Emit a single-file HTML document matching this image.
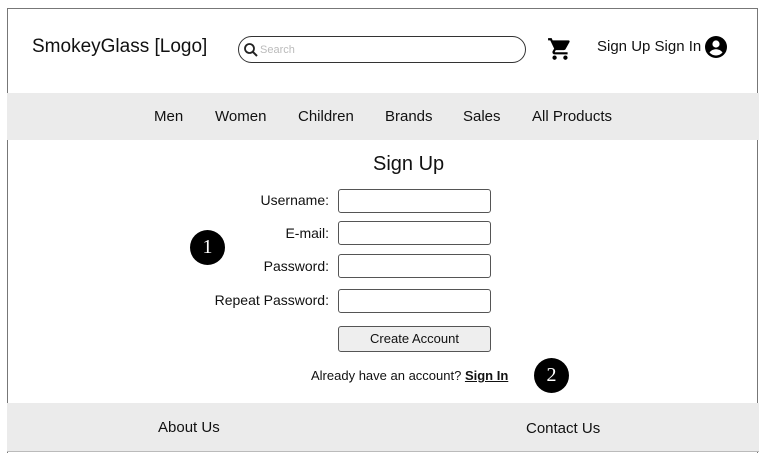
<!DOCTYPE html>
<html><head><meta charset="utf-8"><style>
*{margin:0;padding:0;box-sizing:border-box}
body{width:770px;height:463px;background:#fff;font-family:"Liberation Sans",Arial,sans-serif;color:#111;position:relative;overflow:hidden}
.a{position:absolute;white-space:nowrap}
.frame{left:7px;top:8px;width:751px;height:445px;border:1px solid #777;border-bottom:none}
.band{background:#ebebeb;left:7px;width:752px}
.inp{position:absolute;left:338px;width:153px;height:24px;border:1px solid #555;border-radius:3px;background:#fff}
.lbl{position:absolute;right:441px;font-size:14px}
.circ{position:absolute;width:35px;height:35px;border-radius:50%;background:#000;color:#fff;font-family:"Liberation Serif",serif;font-size:20px;text-align:center;line-height:35px}
</style></head><body>
<div class="a frame"></div>
<div class="a" style="left:32px;top:36px;font-size:19px">SmokeyGlass [Logo]</div>
<div class="a" style="left:238px;top:36px;width:288px;height:27px;border:1px solid #333;border-radius:14px"></div>
<svg class="a" style="left:243px;top:42px" width="16" height="16" viewBox="0 0 16 16"><circle cx="6.5" cy="6.5" r="4.5" fill="none" stroke="#222" stroke-width="1.8"/><line x1="10" y1="10" x2="14" y2="14" stroke="#222" stroke-width="2"/></svg>
<div class="a" style="left:260px;top:44px;font-size:11px;color:#bbb">Search</div>
<svg class="a" style="left:547px;top:36px" width="26" height="26" viewBox="0 0 24 24"><path d="M7 18c-1.1 0-2 .9-2 2s.9 2 2 2 2-.9 2-2-.9-2-2-2zM1 2v2h2l3.6 7.6-1.4 2.4c-.1.3-.2.6-.2 1 0 1.1.9 2 2 2h12v-2H7.4c-.1 0-.2-.1-.2-.2v-.1l.9-1.7h7.4c.8 0 1.4-.4 1.7-1l3.6-6.5c.1-.2.1-.3.1-.5 0-.6-.4-1-1-1H5.2l-.9-2H1zm16 16c-1.1 0-2 .9-2 2s.9 2 2 2 2-.9 2-2-.9-2-2-2z" fill="#000"/></svg>
<div class="a" style="left:597px;top:38px;font-size:15px">Sign Up Sign In</div>
<svg class="a" style="left:704px;top:35px" width="24" height="24" viewBox="0 0 24 24"><circle cx="12" cy="12" r="11" fill="#000"/><circle cx="12" cy="9" r="3.6" fill="#fff"/><path d="M5.5 17.5c1.5-2.3 4-3.3 6.5-3.3s5 1 6.5 3.3c-1.7 1.9-4 3-6.5 3s-4.8-1.1-6.5-3z" fill="#fff"/></svg>
<div class="a band" style="top:93px;height:47px"></div>
<div class="a" style="top:108px;left:154px;font-size:15px">Men</div>
<div class="a" style="top:108px;left:215px;font-size:15px">Women</div>
<div class="a" style="top:108px;left:298px;font-size:15px">Children</div>
<div class="a" style="top:108px;left:385px;font-size:15px">Brands</div>
<div class="a" style="top:108px;left:463px;font-size:15px">Sales</div>
<div class="a" style="top:108px;left:532px;font-size:15px">All Products</div>
<div class="a" style="left:373px;top:153px;font-size:20px">Sign Up</div>
<div class="lbl" style="top:192px">Username:</div><div class="inp" style="top:189px"></div>
<div class="lbl" style="top:225px">E-mail:</div><div class="inp" style="top:221px"></div>
<div class="lbl" style="top:258px">Password:</div><div class="inp" style="top:254px"></div>
<div class="lbl" style="top:292px">Repeat Password:</div><div class="inp" style="top:289px"></div>
<div class="a" style="left:338px;top:326px;width:153px;height:26px;border:1px solid #555;border-radius:3px;background:#eee;font-size:13px;text-align:center;line-height:24px">Create Account</div>
<div class="a" style="left:311px;top:368px;font-size:13px">Already have an account? <b style="text-decoration:underline">Sign In</b></div>
<div class="circ" style="left:190px;top:230px">1</div>
<div class="circ" style="left:534px;top:358px">2</div>
<div class="a band" style="top:403px;height:49px;border-bottom:1px solid #bbb"></div>
<div class="a" style="left:158px;top:419px;font-size:15px">About Us</div>
<div class="a" style="left:526px;top:420px;font-size:15px">Contact Us</div>
</body></html>
